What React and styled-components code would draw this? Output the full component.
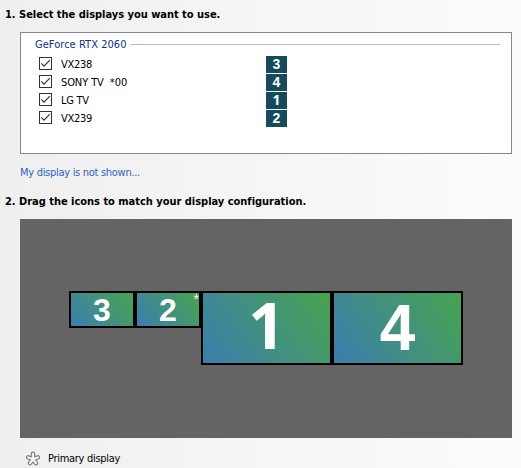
import React from "react";
import styled, { createGlobalStyle } from "styled-components";

const GlobalStyle = createGlobalStyle`
  * { box-sizing: border-box; }
  body { margin: 0; overflow: hidden; }
`;

const Page = styled.main`
  width: 521px;
  height: 468px;
  padding: 6px 9px 0 5px;
  display: flex;
  flex-direction: column;
  background: linear-gradient(90deg, #efefef 0%, #f2f2f2 25%, #f8f8f8 70%, #fcfcfc 100%);
  color: #000;
  font: 11px/16px "DejaVu Sans Condensed", "DejaVu Sans", sans-serif;
  white-space: pre;
`;

const Heading = styled.h2`
  margin: ${(p) => (p.$spaced ? "13px 0 0" : "0")};
  height: 16px;
  font-size: 11px;
  font-weight: 700;
  line-height: 17px;
  letter-spacing: -0.02px;
`;

const DisplayPanel = styled.section`
  margin: 10px 0 0 15px;
  height: 122px;
  padding: 3px 11px 0 14px;
  border: 1px solid #828790;
  background: #fff;
`;

const GroupTitle = styled.div`
  display: flex;
  align-items: center;
  height: 16px;
  color: #0c2f96;
  margin-bottom: 3px;
`;

const GroupName = styled.span`
  width: 95px;
  line-height: 17px;
  letter-spacing: 0.04px;
`;

const Rule = styled.span`
  flex: 1;
  height: 1px;
  background: #afbdd8;
`;

const DisplayRow = styled.label`
  display: grid;
  grid-template-columns: 22px 205px 21px;
  align-items: center;
  height: 18px;
  padding-left: 4px;
`;

const CheckIcon = styled.svg`
  display: block;
  width: 13px;
  height: 13px;
  margin-bottom: 1px;
`;

const DisplayName = styled.span`
  height: 18px;
  line-height: 19px;
  letter-spacing: ${(p) => (p.$wide ? "-0.1px" : "-0.3px")};
`;

const Badge = styled.span`
  height: 17px;
  background: #134a5c;
  color: #fff;
  font: bold 14px/17px "Liberation Sans", Arial, sans-serif;
  ${(p) => p.$plainOne && 'font-family: "Open Sans", sans-serif; line-height: 15px;'}
  text-align: center;
`;

const HelpLink = styled.a`
  align-self: flex-start;
  margin: 10px 0 0 15px;
  height: 16px;
  color: #2a62cc;
  line-height: 17px;
  letter-spacing: -0.29px;
`;

const Canvas = styled.section`
  margin: 10px 0 0 15px;
  height: 219px;
  padding: 72px 0 0 49px;
  display: flex;
  align-items: flex-start;
  background: #646464;
`;

const Monitor = styled.div`
  position: relative;
  width: ${(p) => (p.$large ? "131px" : "66px")};
  height: ${(p) => (p.$large ? "74px" : "37px")};
  border: 2px solid #000;
  background: linear-gradient(55deg, #3b7eb0 0%, #47a34e 100%);
  color: #fff;
  font: bold ${(p) => (p.$large ? "64px/70px" : "32px/35px")} "Liberation Sans", Arial, sans-serif;
  ${(p) => p.$plainOne && 'font-family: "Open Sans", sans-serif; line-height: 63px;'}
  text-align: center;
`;

const PrimaryMark = styled.span`
  position: absolute;
  top: -1px;
  right: 0;
  font: 14px/14px "Liberation Sans", Arial, sans-serif;
`;

const Legend = styled.footer`
  display: flex;
  margin: 12px 0 0 20px;
  height: 17px;
  gap: 7px;
`;

const StarIcon = styled.svg`
  width: 16px;
  height: 16px;
  margin-top: 1px;
`;

const LegendText = styled.span`
  line-height: 17px;
  letter-spacing: -0.3px;
`;

const displays = [
  { name: "VX238", number: 3 },
  { name: "SONY TV  *00", number: 4, wide: true },
  { name: "LG TV", number: 1 },
  { name: "VX239", number: 2 },
];

const monitors = [
  { number: 3 },
  { number: 2, primary: true },
  { number: 1, large: true },
  { number: 4, large: true },
];

const Check = () => (
  <CheckIcon viewBox="0 0 13 13">
    <rect x="0.5" y="0.5" width="12" height="12" fill="#fff" stroke="#333" />
    <path d="M2.3 6.3 L5 9.1 L10.8 3.2" fill="none" stroke="#333" strokeWidth="1.2" />
  </CheckIcon>
);

const armAngles = [0, 72, 144, 216, 288];
const Arms = () => armAngles.map((a) => (
  <path key={a} d="M8 8 V2.9" transform={`rotate(${a} 8 8)`} />
));

const Star = () => (
  <StarIcon viewBox="0 0 16 16" fill="none" strokeLinecap="round">
    <g stroke="#808080" strokeWidth="4.6"><Arms /></g>
    <g stroke="#f4f4f4" strokeWidth="2.2"><Arms /></g>
  </StarIcon>
);

export default function App() {
  return (
    <>
      <GlobalStyle />
      <Page>
        <Heading>1. Select the displays you want to use.</Heading>
        <DisplayPanel>
          <GroupTitle>
            <GroupName>GeForce RTX 2060</GroupName>
            <Rule />
          </GroupTitle>
          {displays.map((d) => (
            <DisplayRow key={d.number}>
              <Check />
              <DisplayName $wide={d.wide}>{d.name}</DisplayName>
              <Badge $plainOne={d.number === 1}>{d.number}</Badge>
            </DisplayRow>
          ))}
        </DisplayPanel>
        <HelpLink>My display is not shown...</HelpLink>
        <Heading $spaced>2. Drag the icons to match your display configuration.</Heading>
        <Canvas>
          {monitors.map((m) => (
            <Monitor key={m.number} $large={m.large} $plainOne={m.number === 1}>
              {m.number}
              {m.primary && <PrimaryMark>*</PrimaryMark>}
            </Monitor>
          ))}
        </Canvas>
        <Legend>
          <Star />
          <LegendText>Primary display</LegendText>
        </Legend>
      </Page>
    </>
  );
}
